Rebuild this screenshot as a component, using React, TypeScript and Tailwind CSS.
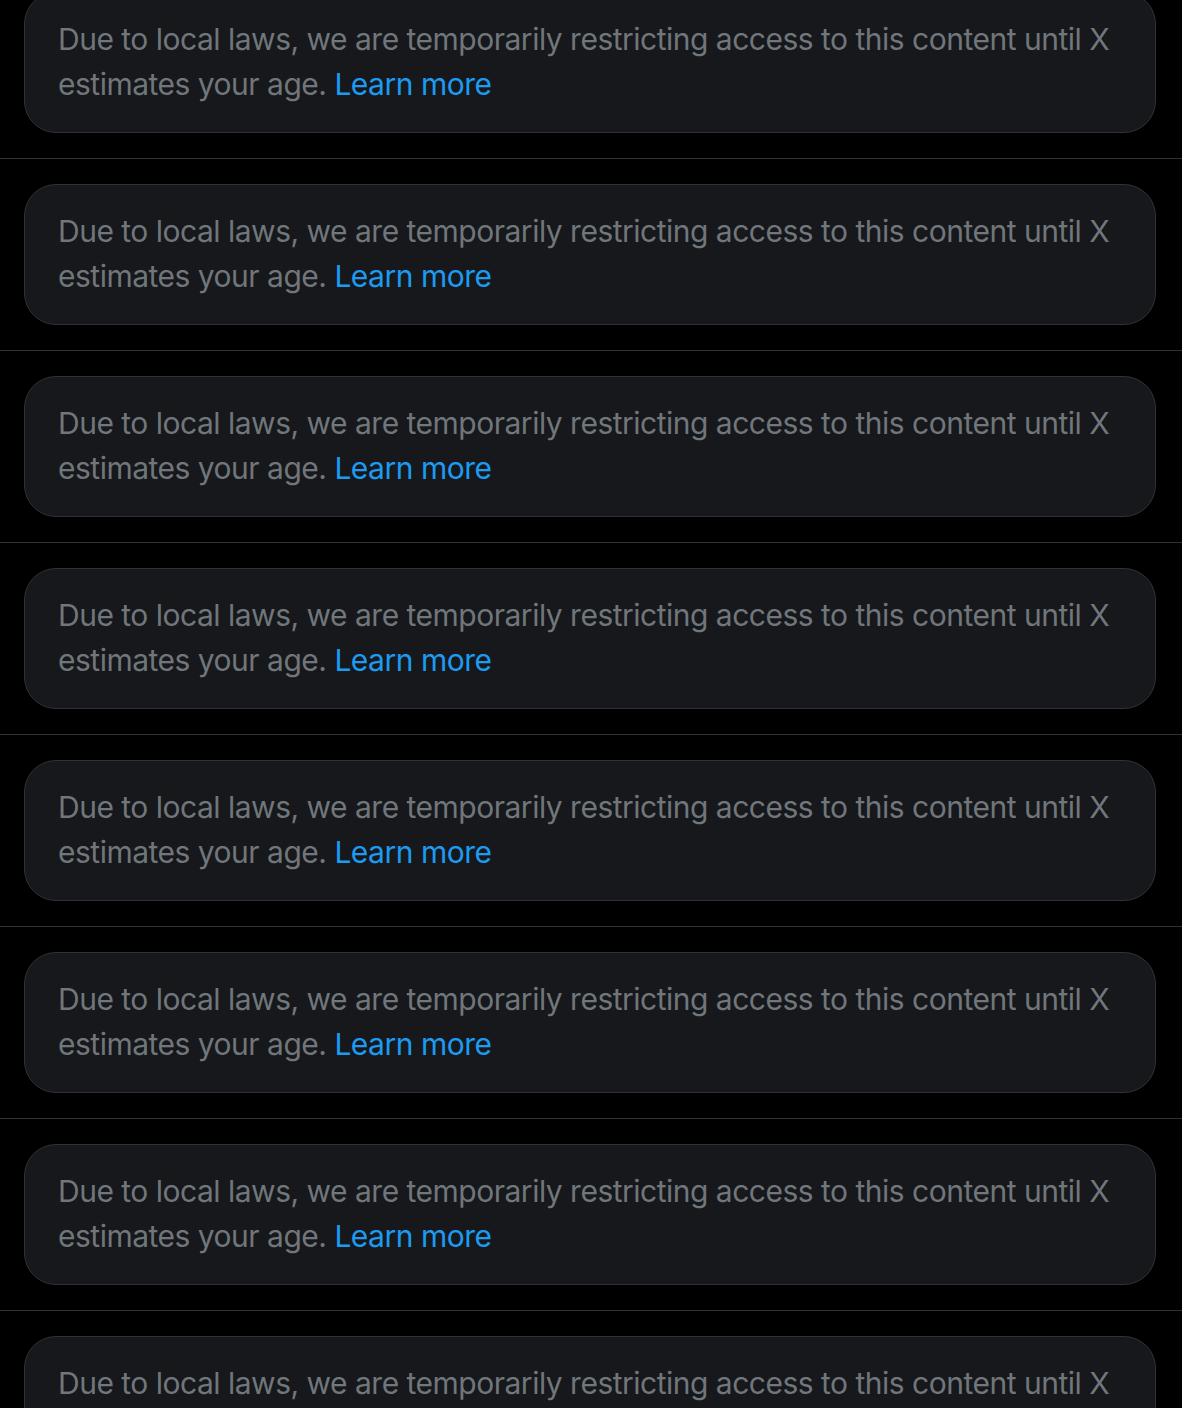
import React from "react";

function Row() {
  return (
    <div className="border-b border-[#2f3336] pl-6 pr-[26px] pt-[25px] pb-[25px]">
      <div className="rounded-[32px] border border-[#2f3336] bg-[#16181c] pl-[33px] pr-[28px] pt-[24px] pb-[25px]">
        <p className="text-[30px] leading-[45px] tracking-[-0.5px] text-[#71767b]">
          Due to local laws, we are temporarily restricting access to this content until X estimates your age.{" "}
          <span className="text-[#1d9bf0]">Learn more</span>
        </p>
      </div>
    </div>
  );
}

export default function App() {
  return (
    <div
      className="h-[1408px] overflow-hidden bg-black"
      style={{ fontFamily: 'Inter, "Noto Sans", sans-serif' }}
    >
      <div className="mt-[-33px] flex flex-col">
        {Array.from({ length: 8 }).map((_, i) => (
          <Row key={i} />
        ))}
      </div>
    </div>
  );
}
